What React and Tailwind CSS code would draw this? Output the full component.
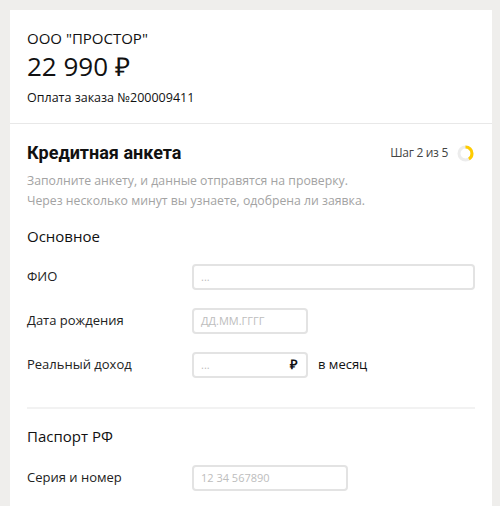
import React from "react";

const font = { fontFamily: '"Open Sans", "Liberation Sans", sans-serif' };

function StepRing() {
  // step 2 of 5 -> 40% arc
  const r = 6.5;
  const c = 2 * Math.PI * r;
  return (
    <svg width="17" height="17" viewBox="0 0 17 17">
      <circle cx="8.5" cy="8.5" r={r} fill="none" stroke="#ececec" strokeWidth="3" />
      <circle
        cx="8.5"
        cy="8.5"
        r={r}
        fill="none"
        stroke="#ffcc00"
        strokeWidth="3"
        strokeDasharray={`${c * 0.4} ${c}`}
        transform="rotate(-90 8.5 8.5)"
      />
    </svg>
  );
}

function Field({ label, placeholder, width, children }) {
  return (
    <div className="flex items-center h-[26px]">
      <div className="w-[165px] text-[13px] text-[#222]">{label}</div>
      <div
        className={`relative h-[26px] border-2 border-[#e3e3e3] rounded-[4px] flex items-center px-[7px] ${width}`}
      >
        <span className="text-[11px] text-[#bdbdbd]">{placeholder}</span>
        {children}
      </div>
    </div>
  );
}

export default function App() {
  return (
    <div className="h-[506px] overflow-hidden bg-[#efeeec] pt-[10px] pl-[10px] pr-[8px]" style={font}>
      <div className="bg-white w-[482px] min-h-[496px]">
        <div className="px-[17px] pt-[17px] pb-[16px] border-b border-[#e8e8e8]">
          <div className="text-[15px] leading-[22px] text-[#111]">ООО "ПРОСТОР"</div>
          <div className="text-[26px] leading-[34px] text-[#111]">22 990 ₽</div>
          <div className="mt-[6px] text-[12.5px] leading-[18px] text-[#111]">
            Оплата заказа №200009411
          </div>
        </div>

        <div className="px-[17px] pt-[16px]">
          <div className="flex items-center justify-between">
            <div
              className="text-[18px] leading-[26px] font-bold text-[#111]"
              style={{ fontFamily: 'Roboto, "Liberation Sans", sans-serif' }}
            >
              Кредитная анкета
            </div>
            <div className="flex items-center gap-[9px] mr-[1px]">
              <span className="text-[12px] text-[#444] tracking-[-0.3px]">Шаг 2 из 5</span>
              <StepRing />
            </div>
          </div>
          <div className="mt-[5px] text-[12.25px] leading-[20px] text-[#a3a3a3]">
            Заполните анкету, и данные отправятся на проверку.
            <br />
            Через несколько минут вы узнаете, одобрена ли заявка.
          </div>

          <div className="mt-[14px] text-[15px] leading-[22px] text-[#111]">Основное</div>

          <div className="mt-[17px] flex flex-col gap-[18px]">
            <Field label="ФИО" placeholder="..." width="w-[283px]" />
            <Field label="Дата рождения" placeholder="ДД.ММ.ГГГГ" width="w-[116px]" />
            <div className="flex items-center">
              <Field label="Реальный доход" placeholder="..." width="w-[116px]">
                <span className="absolute right-[8px] text-[13px] font-bold text-[#111]">₽</span>
              </Field>
              <span className="ml-[10px] text-[13px] text-[#111]">в месяц</span>
            </div>
          </div>

          <div className="mt-[29px] border-t-2 border-[#f2f2f2]" />

          <div className="mt-[16px] text-[15px] leading-[22px] text-[#111]">Паспорт РФ</div>

          <div className="mt-[18px]">
            <Field label="Серия и номер" placeholder="12 34 567890" width="w-[156px]" />
          </div>
        </div>
      </div>
    </div>
  );
}
